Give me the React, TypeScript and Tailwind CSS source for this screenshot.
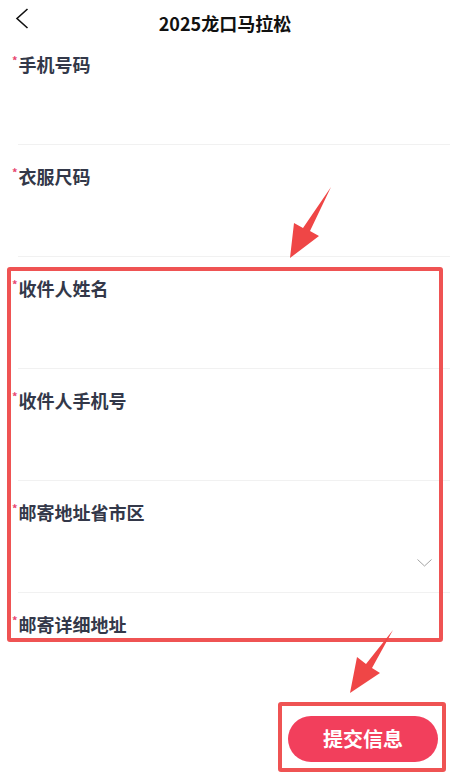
import React from "react";

const fields = [
  { label: "手机号码" },
  { label: "衣服尺码" },
  { label: "收件人姓名" },
  { label: "收件人手机号" },
  { label: "邮寄地址省市区", select: true },
  { label: "邮寄详细地址" },
];

function FormField({
  label,
  select,
  first,
}: {
  label: string;
  select?: boolean;
  first?: boolean;
}) {
  return (
    <div className={first ? "pt-[8px]" : "pt-[19px]"}>
      <div className="flex items-start pl-[12px] h-[24px]">
        <span className="text-[11px] leading-[14px] text-[#e8476f] font-bold mr-[1px] mt-[1px]">*</span>
        <span className="text-[18px] leading-[24px] font-bold text-[#333849]">{label}</span>
      </div>
      <div className="h-[68px] flex justify-end items-start pt-[35px] pr-[18px]">
        {select && (
          <svg width="15" height="8" viewBox="0 0 15 8" fill="none">
            <polyline points="0.5,0.5 7.5,7 14.5,0.5" stroke="#a3a3a3" strokeWidth="1" />
          </svg>
        )}
      </div>
      <div className="ml-[18px] border-b border-[#f1f1f1]" />
    </div>
  );
}

export default function App() {
  return (
    <div
      className="relative w-[450px] h-[774px] bg-white overflow-hidden flex flex-col"
      style={{ fontFamily: '"Noto Sans CJK SC", "Noto Sans", sans-serif' }}
    >
      {/* Header */}
      <div className="h-[44px] shrink-0 grid grid-cols-[60px_1fr_60px]">
        <div className="pl-[15px] pt-[8px]">
          <svg width="14" height="21" viewBox="0 0 14 21" fill="none">
            <polyline points="12.5,1 2,10.5 12.5,20" stroke="#111" strokeWidth="1.6" strokeLinejoin="miter" />
          </svg>
        </div>
        <div className="flex items-center justify-center pt-[1px]">
          <span className="text-[18px] leading-[24px] font-bold text-[#111]">2025龙口马拉松</span>
        </div>
        <div />
      </div>

      {/* Form */}
      <div className="flex-1 overflow-hidden">
        {fields.map((f, i) => (
          <FormField key={f.label} label={f.label} select={f.select} first={i === 0} />
        ))}
      </div>

      {/* Footer */}
      <div className="h-[71px] shrink-0 bg-white flex items-center justify-end pr-[12px]">
        <button className="w-[150px] h-[46px] rounded-full bg-[#f23f5c] text-white text-[20px] font-bold leading-none">
          提交信息
        </button>
      </div>

      {/* Annotation boxes */}
      <div className="absolute left-[7px] top-[267px] w-[436px] h-[375px] border-[4px] border-[#ef5353] rounded-[3px] pointer-events-none" />
      <div className="absolute left-[278px] top-[702px] w-[168px] h-[70px] border-[4px] border-[#ef5353] rounded-[3px] pointer-events-none" />

      {/* Annotation arrows */}
      <svg className="absolute inset-0 pointer-events-none" width="450" height="774" viewBox="0 0 450 774">
        <polygon
          points="331,187 310,231 319,236 290,258 294,223 303,228"
          fill="#ef4646"
        />
        <polygon
          points="393,630 372,668 380,673 350,693 357,657 366,664"
          fill="#ef4646"
        />
      </svg>
    </div>
  );
}
